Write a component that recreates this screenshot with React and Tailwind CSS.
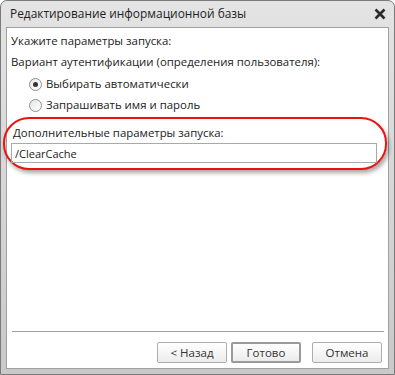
import React, { useState } from "react";

const Radio = ({ checked, label, onClick }) => (
  <label className="flex items-center gap-[4px] h-[20px] cursor-default" onClick={onClick}>
    <span className="w-[13px] h-[13px] rounded-full border border-[#8e8f8f] bg-gradient-to-br from-[#e6e6e6] to-white flex items-center justify-center">
      {checked && <span className="w-[5px] h-[5px] rounded-full bg-[#333]" />}
    </span>
    <span>{label}</span>
  </label>
);

const Button = ({ children, primary }) => (
  <button
    className={
      "w-[70px] h-[21px] rounded-[2px] bg-gradient-to-b from-white to-[#ececec] text-[#333] text-[11.5px] leading-none " +
      (primary ? "border-2 border-[#9a9a9a]" : "border border-[#adadad]")
    }
  >
    {children}
  </button>
);

const App = () => {
  const [auto, setAuto] = useState(true);
  const [params, setParams] = useState("/ClearCache");

  return (
    <div
      className="w-[395px] h-[375px] flex flex-col rounded-t-[7px] border border-[#7a7a7a] bg-gradient-to-b from-[#e4e4e4] to-[#c9c9c9] text-[11.4px] text-[#222]"
      style={{ fontFamily: '"Open Sans", "Liberation Sans", sans-serif' }}
    >
      {/* Title bar */}
      <div className="h-[26px] flex items-center justify-between pl-[9px] pr-[8px] shrink-0">
        <span className="text-[11.9px] text-[#1e1e1e]">Редактирование информационной базы</span>
        <svg width="12" height="12" viewBox="0 0 12 12">
          <path d="M1.5 1.5 L10.5 10.5 M10.5 1.5 L1.5 10.5" stroke="#2b2b2b" strokeWidth="2.6" />
        </svg>
      </div>

      {/* Client area */}
      <div className="flex-1 mx-[5px] mb-[5px] border border-[#a0a0a0] bg-white flex flex-col pt-[2px] px-[2px]">
        <div className="px-[2px] h-[22px] flex items-center">Укажите параметры запуска:</div>
        <div className="px-[2px] h-[20px] flex items-center">Вариант аутентификации (определения пользователя):</div>
        <div className="pl-[20px] pt-[2px] flex flex-col gap-[1px]">
          <Radio checked={auto} label="Выбирать автоматически" onClick={() => setAuto(true)} />
          <Radio checked={!auto} label="Запрашивать имя и пароль" onClick={() => setAuto(false)} />
        </div>

        {/* Highlighted section */}
        <div className="-ml-[6px] mr-[-1px] mt-[2px] rounded-[26px] border-2 border-[#ee1111] shadow-[2px_3px_4px_rgba(0,0,0,0.35)] pl-[6px] pr-[8px] pt-[4px] pb-[5px]">
          <div className="h-[20px] flex items-center pl-[2px]">Дополнительные параметры запуска:</div>
          <input
            value={params}
            onChange={(e) => setParams(e.target.value)}
            className="w-full h-[20px] border border-[#a9a9a9] px-[3px] outline-none text-[11px] text-[#222]"
          />
        </div>

        <div className="flex-1" />
        <div className="ml-[3px] mr-[2px] border-t border-[#a0a0a0]" />
        <div className="flex justify-end gap-[4px] pr-[4px] pt-[10px] pb-[5px]">
          <Button>&lt; Назад</Button>
          <Button primary>Готово</Button>
          <div className="w-[3px]" />
          <Button>Отмена</Button>
        </div>
      </div>
    </div>
  );
};

export default App;
